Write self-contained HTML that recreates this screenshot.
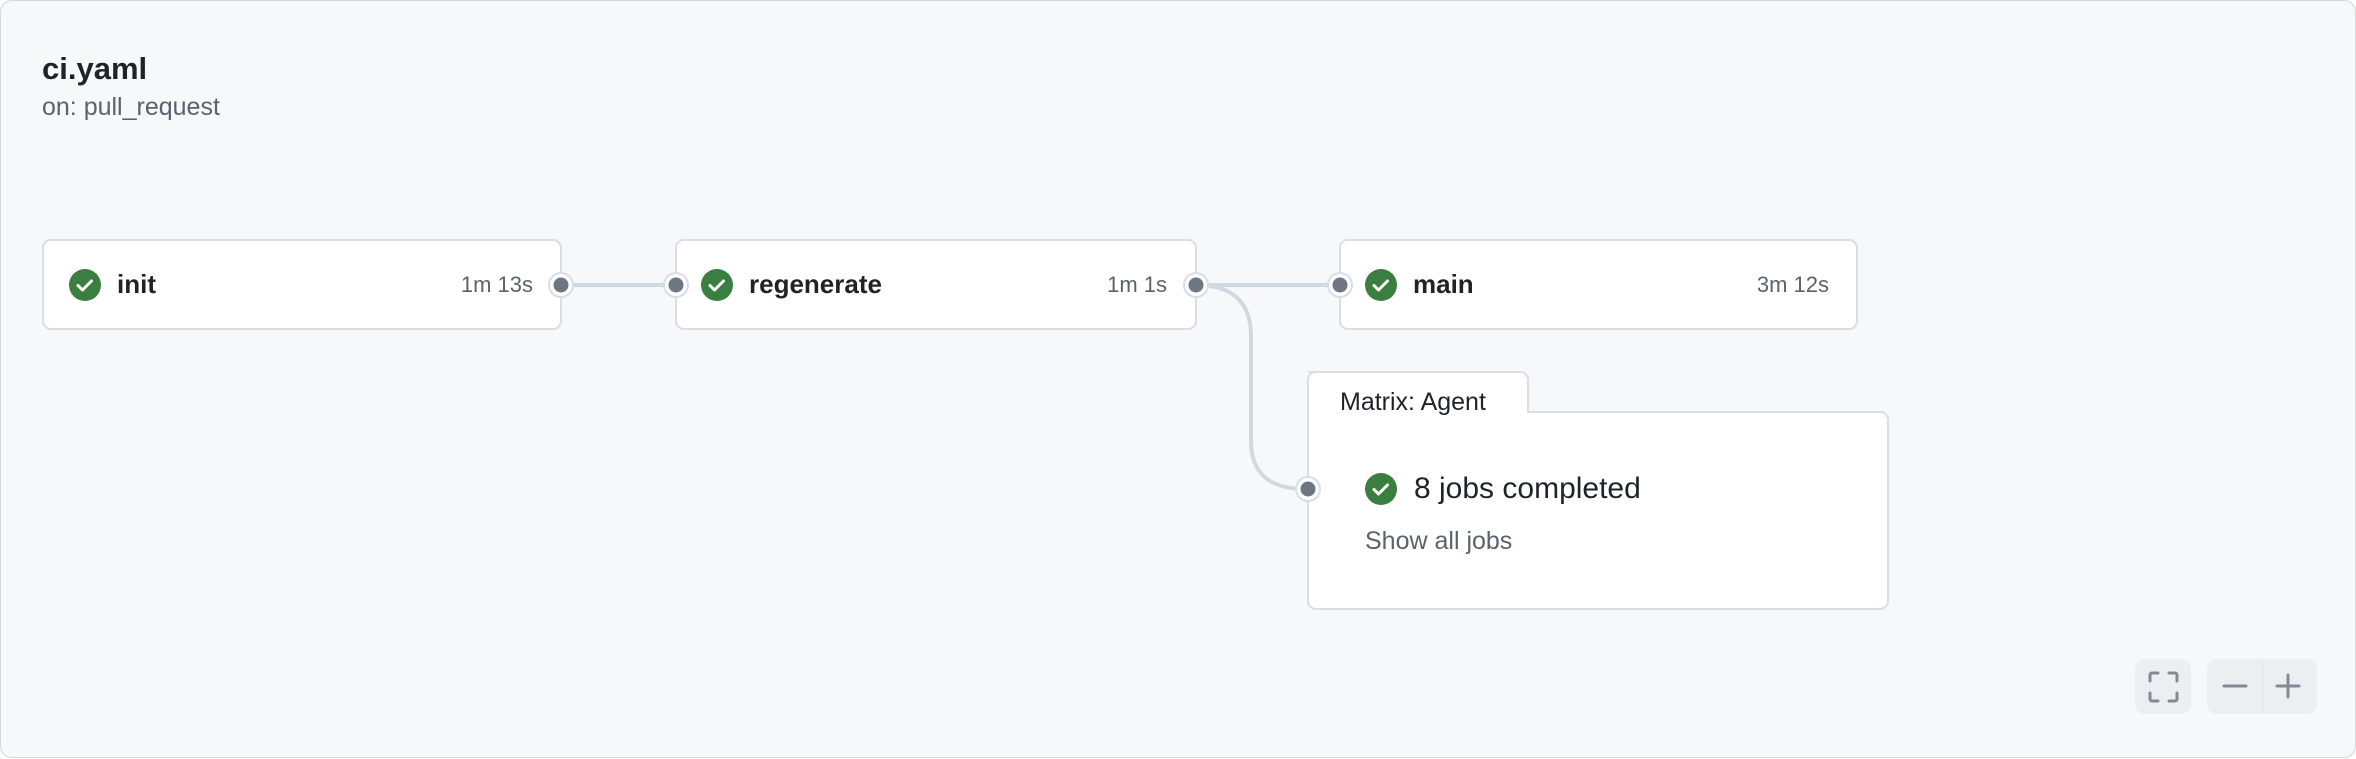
<!DOCTYPE html>
<html><head><meta charset="utf-8"><style>
html,body{margin:0;padding:0;width:2356px;height:758px;overflow:hidden;background:#fff}
#w{position:absolute;left:0;top:0;width:2354px;height:756px;border:1px solid #d1d9e0;border-radius:12px;background:#f6f8fa;font-family:"Liberation Sans",sans-serif;color:#1f2328}
.a{position:absolute;white-space:nowrap}
.card{position:absolute;background:#fff;border:2px solid #d8dee4;border-radius:9px;box-sizing:border-box}
.nm{position:absolute;font-size:26px;font-weight:bold;color:#1f2328}
.tm{position:absolute;font-size:22px;color:#59636e}
.btn{position:absolute;background:#eceff2;border-radius:10px}
</style></head><body><div id="w">
<div class="a" style="left:41px;top:50px;font-size:31px;font-weight:bold">ci.yaml</div>
<div class="a" style="left:41px;top:92px;font-size:25px;color:#59636e">on: pull_request</div>

<div class="card" style="left:41px;top:238px;width:520px;height:91px"></div>
<div class="card" style="left:674px;top:238px;width:522px;height:91px"></div>
<div class="card" style="left:1338px;top:238px;width:519px;height:91px"></div>

<svg class="a" style="left:0;top:0" width="2356" height="758">
<path d="M1307 371 h212 a8 8 0 0 1 8 8 v32 h352 a8 8 0 0 1 8 8 v181 a8 8 0 0 1 -8 8 h-564 a8 8 0 0 1 -8 -8 v-221 a8 8 0 0 1 8 -8 z" fill="#fff" stroke="#d8dee4" stroke-width="2"/>
<g stroke="#d1d9e0" stroke-width="4" fill="none">
<line x1="560" y1="284" x2="675" y2="284"/>
<line x1="1195" y1="284" x2="1339" y2="284"/>
<path d="M1195 284 C1232 284 1250 302 1250 335 L1250 440 C1250 472 1268 488 1305 488"/>
</g>
<g fill="#fff" stroke="#d8dee4" stroke-width="2">
<circle cx="560" cy="284" r="12"/><circle cx="675" cy="284" r="12"/>
<circle cx="1195" cy="284" r="12"/><circle cx="1339" cy="284" r="12"/>
<circle cx="1307" cy="488" r="12"/>
</g>
<g fill="#6e7781">
<circle cx="560" cy="284" r="7.5"/><circle cx="675" cy="284" r="7.5"/>
<circle cx="1195" cy="284" r="7.5"/><circle cx="1339" cy="284" r="7.5"/>
<circle cx="1307" cy="488" r="7.5"/>
</g>
<g>
<circle cx="84" cy="284" r="16" fill="#3a7f3f"/><path d="M77 284.5l4.5 4.5 9-9" stroke="#fff" stroke-width="3" fill="none" stroke-linecap="round" stroke-linejoin="round"/>
<circle cx="716" cy="284" r="16" fill="#3a7f3f"/><path d="M709 284.5l4.5 4.5 9-9" stroke="#fff" stroke-width="3" fill="none" stroke-linecap="round" stroke-linejoin="round"/>
<circle cx="1380" cy="284" r="16" fill="#3a7f3f"/><path d="M1373 284.5l4.5 4.5 9-9" stroke="#fff" stroke-width="3" fill="none" stroke-linecap="round" stroke-linejoin="round"/>
<circle cx="1380" cy="488" r="16" fill="#3a7f3f"/><path d="M1373 488.5l4.5 4.5 9-9" stroke="#fff" stroke-width="3" fill="none" stroke-linecap="round" stroke-linejoin="round"/>
</g>
</svg>

<div class="nm" style="left:116px;top:268px">init</div>
<div class="tm" style="right:1822px;top:271px">1m 13s</div>
<div class="nm" style="left:748px;top:268px">regenerate</div>
<div class="tm" style="right:1188px;top:271px">1m 1s</div>
<div class="nm" style="left:1412px;top:268px">main</div>
<div class="tm" style="right:526px;top:271px">3m 12s</div>

<div class="a" style="left:1339px;top:387px;font-size:25px">Matrix: Agent</div>
<div class="a" style="left:1413px;top:471px;font-size:30px">8 jobs completed</div>
<div class="a" style="left:1364px;top:526px;font-size:25px;color:#59636e">Show all jobs</div>

<div class="btn" style="left:2134px;top:658px;width:56px;height:55px"></div>
<div class="btn" style="left:2206px;top:658px;width:110px;height:55px"></div>
<svg class="a" style="left:0;top:0" width="2356" height="758">
<line x1="2262" y1="660" x2="2262" y2="711" stroke="#e4e8ec" stroke-width="1"/>
<g stroke="#818b98" stroke-width="3" fill="none" stroke-linecap="round">
<path d="M2149 680v-6a2 2 0 0 1 2-2h6M2168 672h6a2 2 0 0 1 2 2v6M2176 692v6a2 2 0 0 1-2 2h-6M2157 700h-6a2 2 0 0 1-2-2v-6"/>
<path d="M2223 685h22"/>
<path d="M2276 685h22M2287 674v22"/>
</g>
</svg>
</div></body></html>
